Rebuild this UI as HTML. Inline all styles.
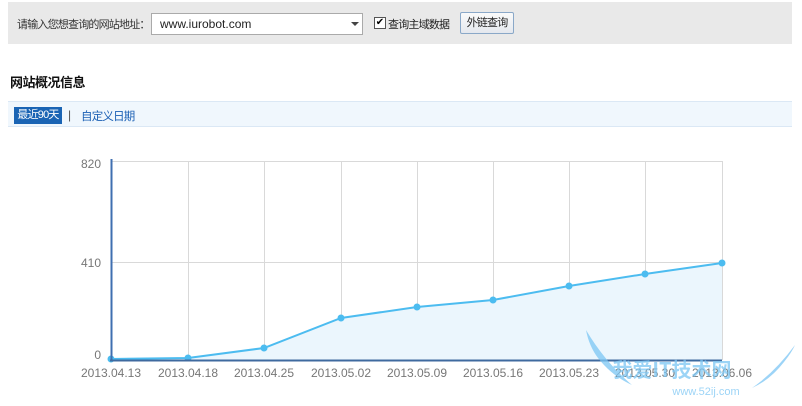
<!DOCTYPE html>
<html><head><meta charset="utf-8"><style>
body{margin:0;width:802px;height:406px;background:#fff;font-family:"Liberation Sans","Noto Sans CJK SC",sans-serif;font-size:12px;position:relative;overflow:hidden}
.bar{position:absolute;left:8px;top:2px;width:784px;height:42px;background:#e9e9e9}
.abs{position:absolute;white-space:nowrap;box-sizing:border-box}
.cjk{font-size:11px;letter-spacing:-0.8px}
</style></head><body>
<div class="bar"></div>
<div class="abs cjk" style="left:17px;top:16px;color:#333">请输入您想查询的网站地址：</div>
<div class="abs" style="left:151px;top:13px;width:212px;height:22px;border:1px solid #aaa;background:#fff"></div>
<div class="abs" style="left:160px;top:17px;color:#222">www.iurobot.com</div>
<div class="abs" style="left:351px;top:22px;width:0;height:0;border-left:4px solid transparent;border-right:4px solid transparent;border-top:4px solid #444"></div>
<div class="abs" style="left:374px;top:17px;width:12px;height:12px;border:1px solid #555;background:#fff;font-size:10px;line-height:10px;text-align:center">✔</div>
<div class="abs cjk" style="left:388px;top:16px;color:#222">查询主域数据</div>
<div class="abs cjk" style="left:460px;top:12px;width:54px;height:22px;border:1px solid #8aa8c8;border-radius:2px;background:linear-gradient(#fafafa,#e4e8ee);text-align:center;line-height:20px;color:#222">外链查询</div>
<div class="abs" style="left:10px;top:72px;font-size:13px;letter-spacing:-0.5px;font-weight:bold;color:#111">网站概况信息</div>
<div class="abs" style="left:8px;top:101px;width:784px;height:26px;background:#f0f7fd;border-top:1px solid #dbe8f5;border-bottom:1px solid #dbe8f5"></div>
<div class="abs cjk" style="left:14px;top:107px;width:48px;height:17px;background:#1a64b4;color:#fff;line-height:17px;text-align:center">最近90天</div>
<div class="abs" style="left:68px;top:108px;color:#555">|</div>
<div class="abs cjk" style="left:81px;top:108px;color:#1a5fb4;font-size:11.5px">自定义日期</div>
<svg class="abs" style="left:0;top:0" width="802" height="406">
<g stroke="#d9d9d9" stroke-width="1">
<line x1="111" y1="161.5" x2="722" y2="161.5"/><line x1="111" y1="262.5" x2="722" y2="262.5"/>
<line x1="188.5" y1="161" x2="188.5" y2="360"/><line x1="264.5" y1="161" x2="264.5" y2="360"/><line x1="341.5" y1="161" x2="341.5" y2="360"/><line x1="417.5" y1="161" x2="417.5" y2="360"/><line x1="493.5" y1="161" x2="493.5" y2="360"/><line x1="569.5" y1="161" x2="569.5" y2="360"/><line x1="645.5" y1="161" x2="645.5" y2="360"/><line x1="722.5" y1="161" x2="722.5" y2="360"/>
</g>
<polygon points="111,359 188,358 264,348 341,318 417,307 493,300 569,286 645,274 722,263 722,360 111,360" fill="#ebf6fd"/>
<polyline points="111,359 188,358 264,348 341,318 417,307 493,300 569,286 645,274 722,263" fill="none" stroke="#4cbcf0" stroke-width="2"/>
<g fill="#4cbcf0"><circle cx="111" cy="359" r="3.5"/><circle cx="188" cy="358" r="3.5"/><circle cx="264" cy="348" r="3.5"/><circle cx="341" cy="318" r="3.5"/><circle cx="417" cy="307" r="3.5"/><circle cx="493" cy="300" r="3.5"/><circle cx="569" cy="286" r="3.5"/><circle cx="645" cy="274" r="3.5"/><circle cx="722" cy="263" r="3.5"/></g>
<line x1="111.5" y1="159" x2="111.5" y2="361" stroke="#3f6fb0" stroke-width="2"/>
<line x1="110" y1="360.5" x2="722" y2="360.5" stroke="#3f6a9f" stroke-width="2"/>
<g fill="#777" font-size="12" font-family="Liberation Sans,sans-serif" text-anchor="end">
<text x="101" y="168">820</text><text x="101" y="267">410</text><text x="101" y="359">0</text></g>
<g fill="#777" font-size="12" font-family="Liberation Sans,sans-serif" text-anchor="middle">
<text x="111" y="377">2013.04.13</text><text x="188" y="377">2013.04.18</text><text x="264" y="377">2013.04.25</text><text x="341" y="377">2013.05.02</text><text x="417" y="377">2013.05.09</text><text x="493" y="377">2013.05.16</text><text x="569" y="377">2013.05.23</text><text x="645" y="377">2013.05.30</text><text x="722" y="377">2013.06.06</text></g>
<g fill="#7cc6f4" opacity="0.75">
<path d="M586,330 Q605,362 632,385 Q612,376 598,358 Q589,346 586,330Z"/>
<path d="M795,345 Q775,372 752,388 Q770,380 784,362 Q792,352 795,345Z"/>
<text x="672" y="377" font-size="20" font-weight="bold" text-anchor="middle" font-family="Noto Sans CJK SC,sans-serif">我爱IT技术网</text>
<text x="706" y="395" font-size="11" text-anchor="middle">www.52ij.com</text>
</g>
</svg>
</body></html>
